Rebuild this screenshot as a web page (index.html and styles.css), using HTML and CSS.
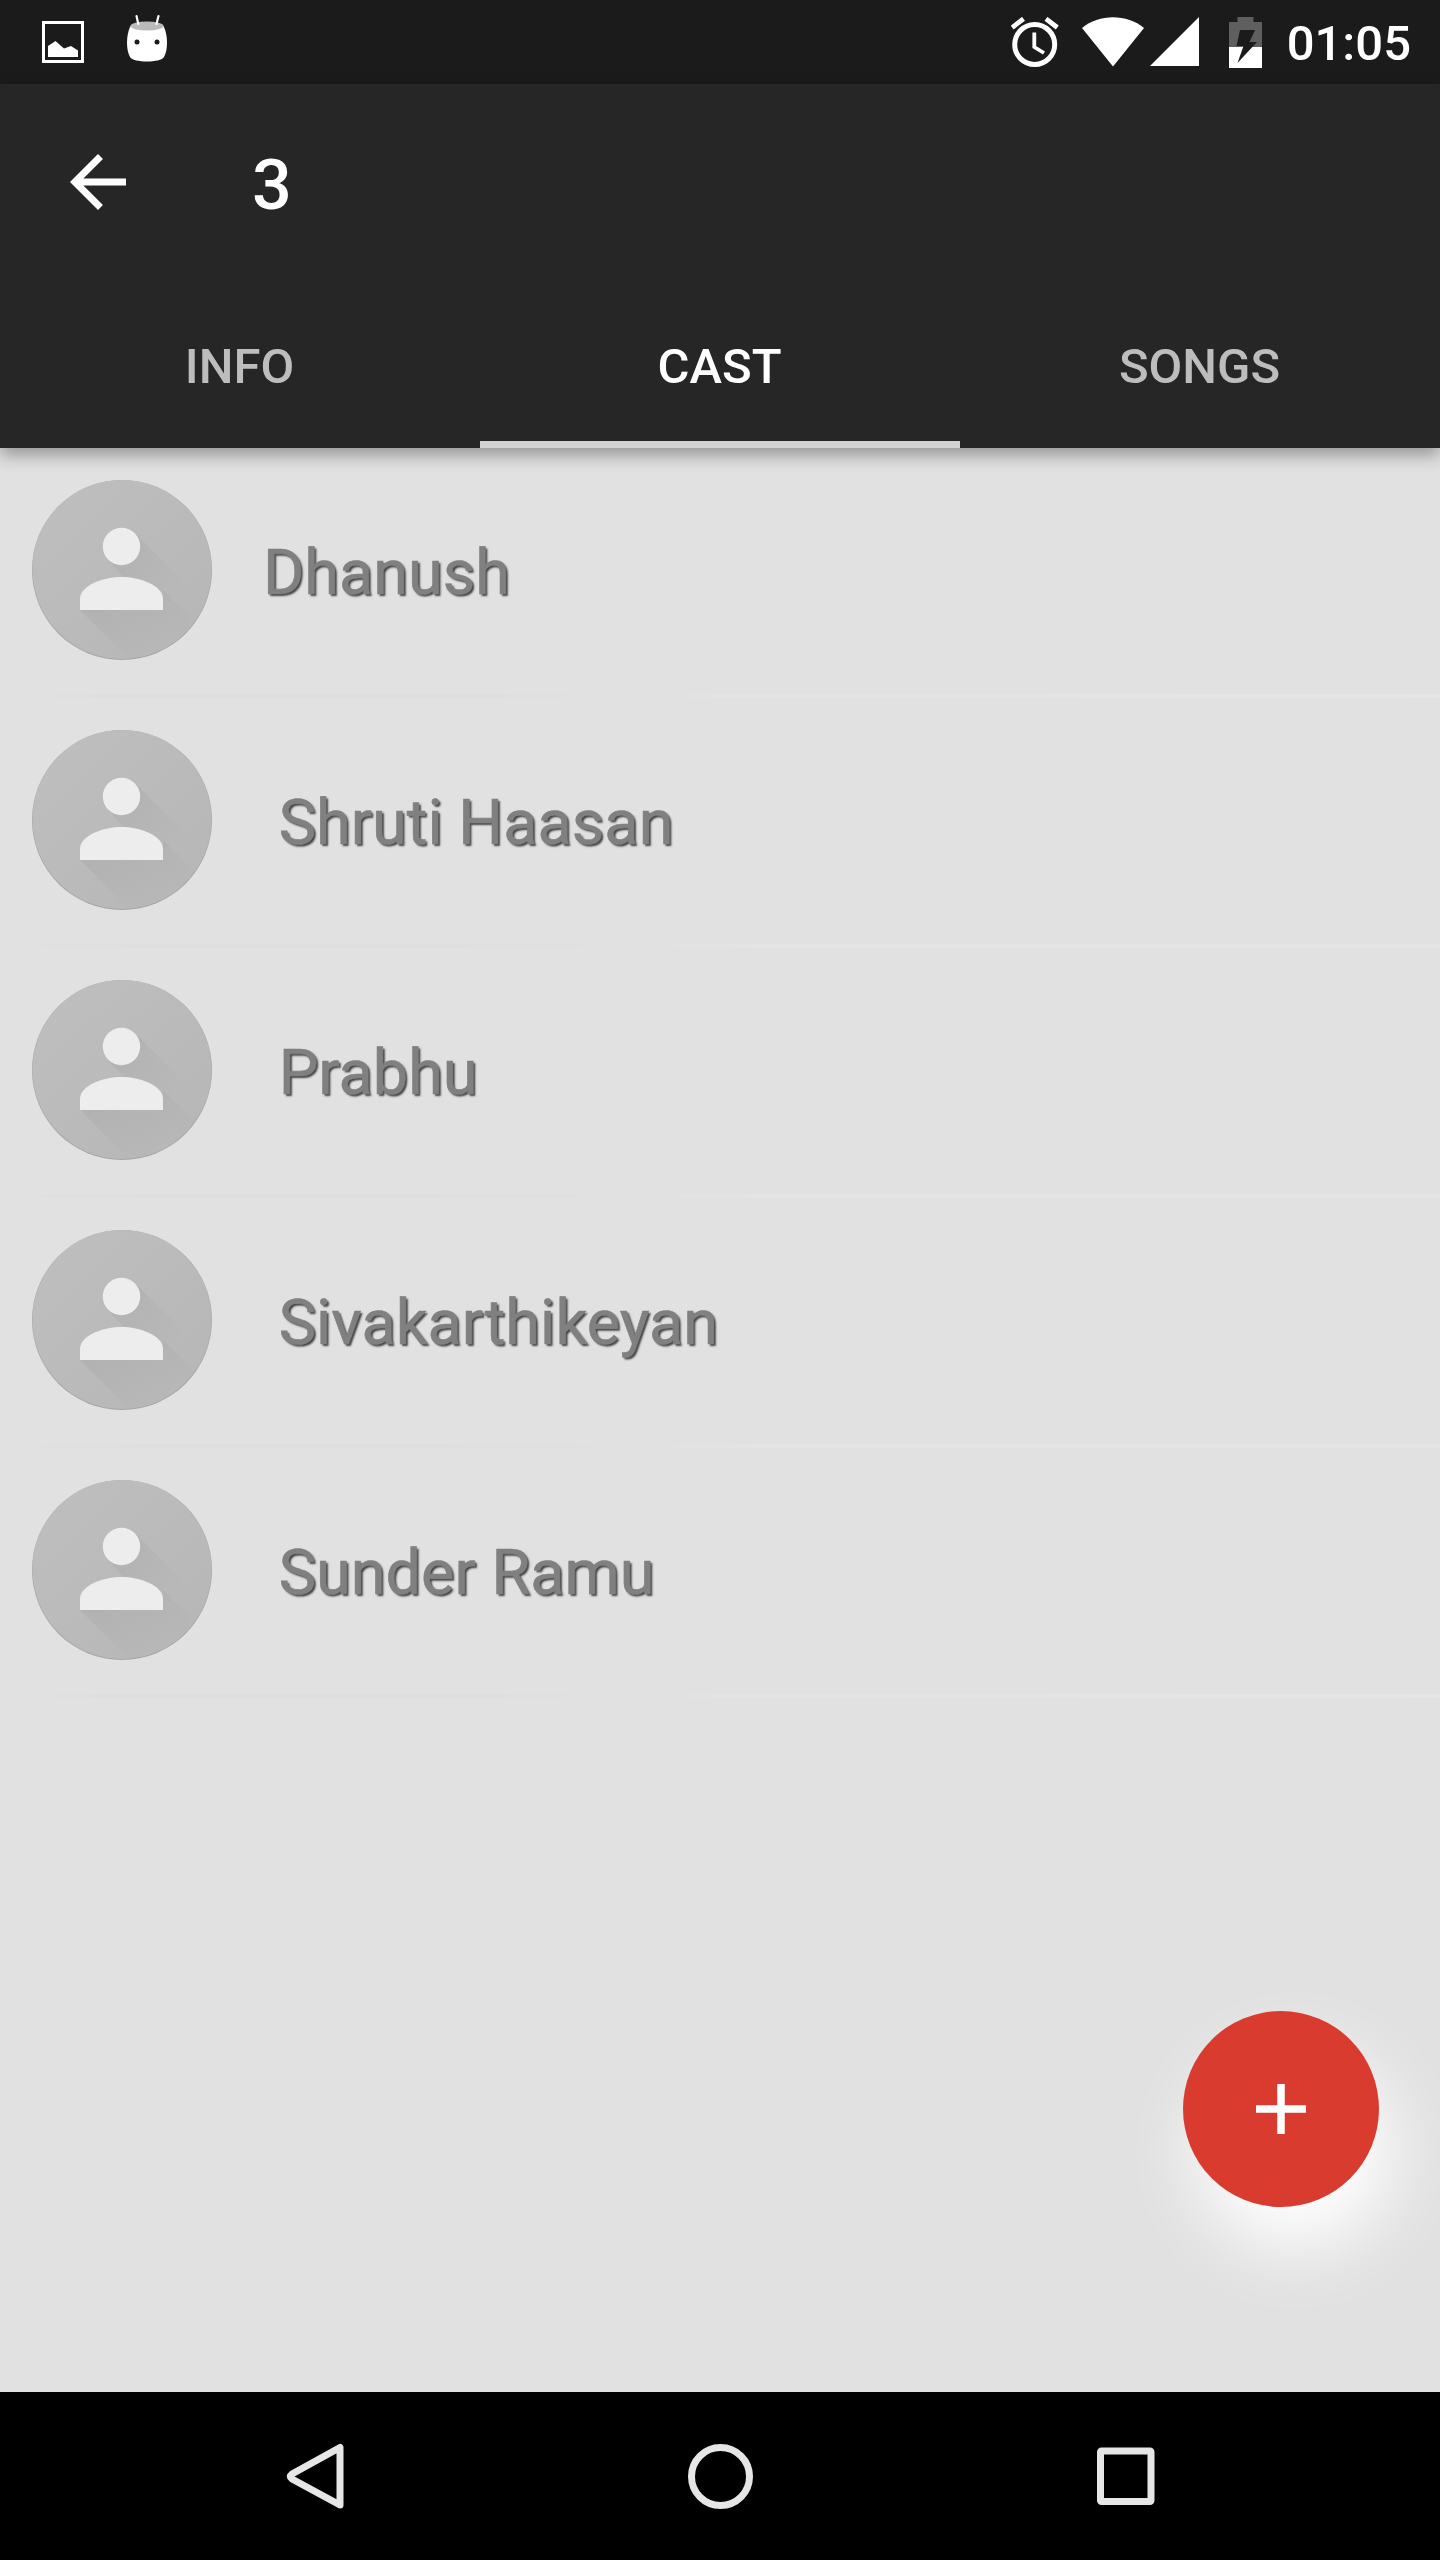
FILE: index.html
```html
<!DOCTYPE html>
<html lang="en">
<head>
    <meta charset="UTF-8">
    <meta name="viewport" content="width=device-width, initial-scale=1.0">
    <title>Cast</title>
    <link rel="stylesheet" href="styles.css">
</head>
<body>
    <svg class="defs" width="0" height="0">
        <defs>
            <linearGradient id="disc" x1="0" y1="0" x2="1" y2="1">
                <stop offset="0" stop-color="#bfbfbf"/>
                <stop offset="1" stop-color="#b6b6b6"/>
            </linearGradient>
            <linearGradient id="cast-shadow" x1="0" y1="0" x2="1" y2="1">
                <stop offset="0" stop-color="#000" stop-opacity="0.06"/>
                <stop offset="0.7" stop-color="#000" stop-opacity="0"/>
            </linearGradient>
            <clipPath id="disc-clip"><circle cx="90" cy="90" r="90"/></clipPath>
        </defs>
        <symbol id="person" viewBox="0 0 180 180">
            <circle cx="90" cy="90" r="90" fill="#a5a5a5"/>
            <circle cx="90" cy="89.5" r="89.5" fill="url(#disc)"/>
            <g clip-path="url(#disc-clip)" fill="url(#cast-shadow)">
                <path d="M103 53 L165 115 L140 150 L76 80z"/>
                <path d="M48 130 H131 V110 L185 164 V184 H102z"/>
            </g>
            <circle cx="89.5" cy="66.500" r="18.700" fill="#ededed"/>
            <path d="M48 130 V119 C48 105 72 97 89.500 97 C107 97 131 105 131 119 V130z" fill="#ededed"/>
        </symbol>
    </svg>

    <div class="screen">
        <div class="status-bar">
            <svg class="picture" width="42" height="42" viewBox="0 0 42 42">
                <rect x="1.500" y="1.500" width="39" height="39" fill="none" stroke="#fff" stroke-width="3"/>
                <path d="M6 36 V25 L13.500 20 L22 27.500 L29 25 L36 29.500 V36z" fill="#fff"/>
            </svg>
            <svg class="android" width="40" height="48" viewBox="0 0 40 48">
                <path d="M3 13 C5 7 35 7 37 13 C41 22 41 36 37 43 C34 49 6 49 3 43 C-1 36 -1 22 3 13z" fill="#fff"/>
                <ellipse cx="20" cy="12" rx="16.500" ry="4.500" fill="#bbb"/>
                <path d="M9.500 2 L11.300 10 M31.500 2 L29.500 10" stroke="#fff" stroke-width="2.200" stroke-linecap="round"/>
                <circle cx="10" cy="28" r="2.500" fill="#1b1b1b"/>
                <circle cx="30" cy="28" r="2.500" fill="#1b1b1b"/>
            </svg>
            <div class="status-right">
                <svg width="48" height="50" viewBox="0 0 48 50">
                    <g fill="none" stroke="#fff">
                        <circle cx="23.700" cy="27.500" r="20" stroke-width="5"/>
                        <path d="M23.300 15.500 V30 L33 36" stroke-width="3.800"/>
                        <path d="M1.200 10.500 L12.500 1.800 M46.300 10.500 L35 1.800" stroke-width="4.800"/>
                    </g>
                </svg>
                <svg class="wifi" width="62" height="50" viewBox="0 0 62 50">
                    <path d="M0 11 C17 -3.500 45 -3.500 62 11 L31 49.500z" fill="#fff"/>
                </svg>
                <svg class="signal" width="49" height="50" viewBox="0 0 49 50">
                    <path d="M49 0 V49 H0z" fill="#fff"/>
                </svg>
                <svg class="battery" width="33" height="51" viewBox="0 0 33 51">
                    <path d="M0 5 H8.500 V0 H24.500 V5 H33 V30 H0z" fill="#5f5f5f"/>
                    <rect y="30" width="33" height="21" fill="#fff"/>
                    <path d="M11 13 H26 L20.500 25 H28 L8.500 46 L14.500 29 H7.500z" fill="#1b1b1b"/>
                </svg>
                <span class="clock">01:05</span>
            </div>
        </div>

        <div class="app-bar">
            <div class="toolbar">
                <svg width="84" height="84" viewBox="0 0 24 24">
                    <path d="M20 11H7.830l5.590-5.590L12 4l-8 8 8 8 1.410-1.410L7.830 13H20v-2z" fill="#fff"/>
                </svg>
                <div class="title">3</div>
            </div>
            <div class="tabs">
                <div class="tab">INFO</div>
                <div class="tab active">CAST</div>
                <div class="tab">SONGS</div>
            </div>
        </div>

        <div class="content">
            <div class="row">
                <svg class="avatar"><use href="#person"/></svg>
                <div class="name">Dhanush</div>
            </div>
            <div class="row">
                <svg class="avatar"><use href="#person"/></svg>
                <div class="name"> Shruti Haasan</div>
            </div>
            <div class="row">
                <svg class="avatar"><use href="#person"/></svg>
                <div class="name"> Prabhu</div>
            </div>
            <div class="row">
                <svg class="avatar"><use href="#person"/></svg>
                <div class="name"> Sivakarthikeyan</div>
            </div>
            <div class="row">
                <svg class="avatar"><use href="#person"/></svg>
                <div class="name"> Sunder Ramu</div>
            </div>
            <div class="fab">
                <svg width="50" height="50" viewBox="0 0 50 50">
                    <path d="M25 0 V50 M0 25 H50" stroke="#fff" stroke-width="7.500"/>
                </svg>
            </div>
        </div>

        <div class="nav-bar">
            <svg width="66" height="66" viewBox="0 0 66 66">
                <path d="M57 4.500 V62 L9 36 Q5.500 33.500 9 31z" fill="none" stroke="#e6e6e6" stroke-width="7" stroke-linejoin="round"/>
            </svg>
            <svg width="66" height="66" viewBox="0 0 66 66">
                <circle cx="32.500" cy="33.500" r="29" fill="none" stroke="#e6e6e6" stroke-width="7"/>
            </svg>
            <svg width="66" height="66" viewBox="0 0 66 66">
                <rect x="7.500" y="8" width="50.500" height="50.500" rx="1" fill="none" stroke="#e6e6e6" stroke-width="7" stroke-linejoin="round"/>
            </svg>
        </div>
    </div>
</body>
</html>
```
FILE: styles.css
```css
body {
    margin: 0;
    font-family: Roboto, sans-serif;
    background-color: #e1e1e1;
}
svg {
    display: block;
    flex-shrink: 0;
}
.defs {
    position: absolute;
}
.screen {
    display: flex;
    flex-direction: column;
    width: 1440px;
    height: 2560px;
    overflow: hidden;
}

/* status bar */
.status-bar {
    display: flex;
    align-items: center;
    box-sizing: border-box;
    height: 84px;
    padding: 0 29px 0 42px;
    background: #1b1b1b;
}
.android {
    margin-left: 43px;
    margin-bottom: 8px;
}
.status-right {
    display: flex;
    align-items: center;
    margin-left: auto;
}
.wifi {
    margin-left: 23px;
}
.signal {
    margin-left: 6px;
}
.battery {
    margin-left: 30px;
}
.clock {
    margin-left: 25px;
    padding-top: 4px;
    font-size: 49px;
    font-weight: 500;
    line-height: 58px;
    color: #fff;
}

/* toolbar and tabs */
.app-bar {
    position: relative;
    z-index: 1;
    background: #262626;
    box-shadow: 0 7px 16px rgba(0, 0, 0, 0.34);
}
.toolbar {
    display: flex;
    align-items: center;
    height: 196px;
    padding-left: 56px;
}
.title {
    margin-left: 112px;
    padding-top: 5px;
    font-size: 70px;
    font-weight: 500;
    line-height: 82px;
    color: #fff;
}
.tabs {
    display: flex;
    height: 168px;
}
.tab {
    flex: 1;
    box-sizing: border-box;
    padding-top: 8px;
    padding-right: 1px;
    border-bottom: 7px solid transparent;
    font-size: 49px;
    font-weight: 500;
    line-height: 158px;
    text-align: center;
    color: #bdbdbd;
}
.tab.active {
    color: #fff;
    border-bottom-color: #d3d0d3;
}

/* cast list */
.content {
    position: relative;
    flex: 1;
}
.row {
    display: flex;
    align-items: center;
    box-sizing: border-box;
    height: 250px;
    padding: 0 32px;
    border-bottom: 4px solid;
    border-image: linear-gradient(to right, #e1e1e1, #dedede 10%, #dedede 30%, #e1e1e1 45%, #e4e4e4 52%, #e5e5e5) 1;
}
.avatar {
    width: 180px;
    height: 180px;
    margin-bottom: 2px;
}
.name {
    margin-left: 51px;
    padding-top: 4px;
    font-size: 63px;
    line-height: 76px;
    white-space: pre;
    color: #808080;
    -webkit-text-stroke: 0.6px #808080;
    text-shadow: 2px 2px 2px #444;
}
.fab {
    position: absolute;
    right: 61px;
    bottom: 185px;
    display: flex;
    align-items: center;
    justify-content: center;
    width: 196px;
    height: 196px;
    border-radius: 50%;
    background: #da3b2f;
    box-shadow: 14px 42px 76px #fff;
}

/* navigation bar */
.nav-bar {
    display: flex;
    align-items: center;
    justify-content: space-between;
    box-sizing: border-box;
    height: 168px;
    padding: 0 281px 0 283px;
    background: #000;
}
```
